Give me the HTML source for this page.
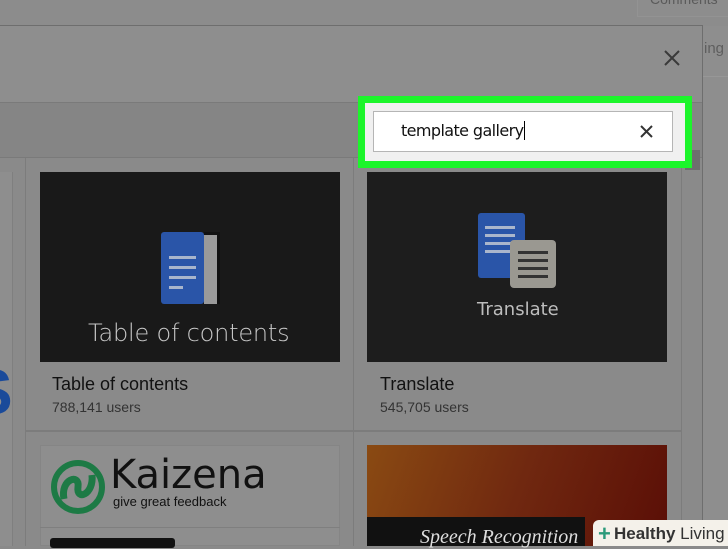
<!DOCTYPE html>
<html><head><style>
*{margin:0;padding:0;box-sizing:border-box}
body{width:728px;height:546px;overflow:hidden;background:#8a8a8a;position:relative;font-family:"Liberation Sans",sans-serif}
.a{position:absolute}
</style></head><body>
<div class="a" style="left:0;top:0;width:728px;height:26px;background:#8c8c8c"></div>
<div class="a" style="left:637px;top:-8px;width:95px;height:25px;border:1px solid #939393;background:#8d8d8d;color:#5a5a5a;font-size:14px;padding:0 0 0 12px;line-height:12px">Comments</div>
<div class="a" style="left:702px;top:26px;width:26px;height:520px;background:#8e8e8e"></div>
<div class="a" style="left:704px;top:40px;color:#5e5e5e;font-size:15px">ing</div>
<div class="a" style="left:702px;top:76px;width:26px;height:1px;background:#979797"></div>
<div class="a" style="left:0;top:25px;width:703px;height:521px;border-top:1px solid #6e6e6e;border-right:1px solid #6e6e6e;background:#8e8e8e"></div>
<svg class="a" style="left:663px;top:49px" width="18" height="18"><path d="M2 2L16 16M16 2L2 16" stroke="#3a3a3a" stroke-width="2"/></svg>
<div class="a" style="left:0;top:102px;width:702px;height:56px;background:#858585;border-top:1px solid #7a7a7a;border-bottom:1px solid #7a7a7a"></div>
<div class="a" style="left:0;top:158px;width:702px;height:388px;background:#8a8a8a"></div>
<div class="a" style="left:0;top:172px;width:13px;height:374px;background:#8e8e8e;border-right:1px solid #7f7f7f"></div>
<div class="a" style="left:-30px;top:355px;color:#1a4a9a;font-size:64px;font-weight:bold">S</div>
<div class="a" style="left:25px;top:158px;width:1px;height:388px;background:#7c7c7c"></div>
<div class="a" style="left:353px;top:158px;width:1px;height:388px;background:#7c7c7c"></div>
<div class="a" style="left:681px;top:158px;width:1px;height:388px;background:#7c7c7c"></div>
<div class="a" style="left:685px;top:150px;width:15px;height:20px;background:#6e6e6e"></div>
<div class="a" style="left:26px;top:430px;width:655px;height:2px;background:#7c7c7c"></div>
<div class="a" style="left:40px;top:172px;width:300px;height:190px;background:#191919"></div>
<div class="a" style="left:161px;top:232px;width:43px;height:72px;background:#2a55a8;border-radius:3px"></div>
<div class="a" style="left:204px;top:232px;width:16px;height:72px;background:#9a9a9a;border-right:3px solid #111;border-top:3px solid #111"></div>
<div class="a" style="left:169px;top:256px;width:27px;height:3px;background:#a8b5cc;box-shadow:0 10px 0 #a8b5cc,0 20px 0 #a8b5cc"></div>
<div class="a" style="left:169px;top:286px;width:14px;height:3px;background:#a8b5cc"></div>
<div class="a" style="left:88px;top:319px;color:#c8c8c8;font-size:24px;font-family:'DejaVu Sans',sans-serif;font-weight:300;letter-spacing:-0.2px">Table of contents</div>
<div class="a" style="left:52px;top:374px;color:#111;font-size:18px">Table of contents</div>
<div class="a" style="left:52px;top:399px;color:#333;font-size:14px">788,141 users</div>
<div class="a" style="left:367px;top:172px;width:300px;height:190px;background:#1d1d1d"></div>
<div class="a" style="left:478px;top:213px;width:47px;height:65px;background:#2a55a8;border-radius:3px"></div>
<div class="a" style="left:485px;top:226px;width:30px;height:3px;background:#aab6cc;box-shadow:0 8px 0 #aab6cc,0 16px 0 #aab6cc,0 24px 0 #aab6cc"></div>
<div class="a" style="left:510px;top:240px;width:46px;height:48px;background:#9a9891;border-radius:4px"></div>
<div class="a" style="left:518px;top:251px;width:30px;height:3px;background:#333;box-shadow:0 8px 0 #333,0 16px 0 #333,0 24px 0 #333"></div>
<div class="a" style="left:477px;top:299px;color:#bdbdbd;font-size:18px;font-family:'DejaVu Sans',sans-serif">Translate</div>
<div class="a" style="left:380px;top:374px;color:#111;font-size:18px">Translate</div>
<div class="a" style="left:380px;top:399px;color:#333;font-size:14px">545,705 users</div>
<div class="a" style="left:40px;top:445px;width:300px;height:101px;background:#8e8e8e;border:1px solid #858585"></div>
<div class="a" style="left:40px;top:527px;width:300px;height:1px;background:#7f7f7f"></div>
<div class="a" style="left:50px;top:538px;width:125px;height:10px;background:#111;border-radius:3px"></div>
<svg class="a" style="left:50px;top:459px" width="56" height="56"><circle cx="28" cy="28" r="24" fill="none" stroke="#1d7a45" stroke-width="6"/><path d="M14 40C10 20 30 14 28 28S44 36 42 16" stroke="#1d7a45" stroke-width="7" fill="none"/></svg>
<div class="a" style="left:110px;top:452px;color:#111;font-size:40px;font-family:'DejaVu Sans',sans-serif">Kaizena</div>
<div class="a" style="left:113px;top:494px;color:#111;font-size:13px">give great feedback</div>
<div class="a" style="left:367px;top:445px;width:300px;height:101px;background:linear-gradient(110deg,#8a4a12,#702810 50%,#5a0e06)"></div>
<div class="a" style="left:367px;top:517px;width:218px;height:29px;background:#111"></div>
<div class="a" style="left:420px;top:526px;color:#ddd;font-size:20px;font-style:italic;font-family:'Liberation Serif',serif">Speech Recognition</div>
<div class="a" style="left:593px;top:520px;width:135px;height:26px;background:#f4f1ea;border-radius:6px 0 0 0"></div>
<div class="a" style="left:598px;top:524px;color:#2a9a7a;font-size:22px;font-weight:bold;line-height:20px">+</div>
<div class="a" style="left:614px;top:524px;color:#333;font-size:17px"><b>Healthy</b> Living</div>
<div class="a" style="left:358px;top:96px;width:334px;height:72px;border:7px solid #1cf52b;background:#f0f0f0"></div>
<div class="a" style="left:373px;top:111px;width:300px;height:41px;background:#fff;border:1px solid #b5b5b5"></div>
<div class="a" style="left:401px;top:121px;color:#111;font-size:16px;font-family:'DejaVu Sans',sans-serif;letter-spacing:-0.6px">template gallery<span style="border-left:1px solid #000;margin-left:1px"></span></div>
<svg class="a" style="left:640px;top:125px" width="13" height="13"><path d="M1 1L12 12M12 1L1 12" stroke="#333" stroke-width="2"/></svg>
</body></html>
